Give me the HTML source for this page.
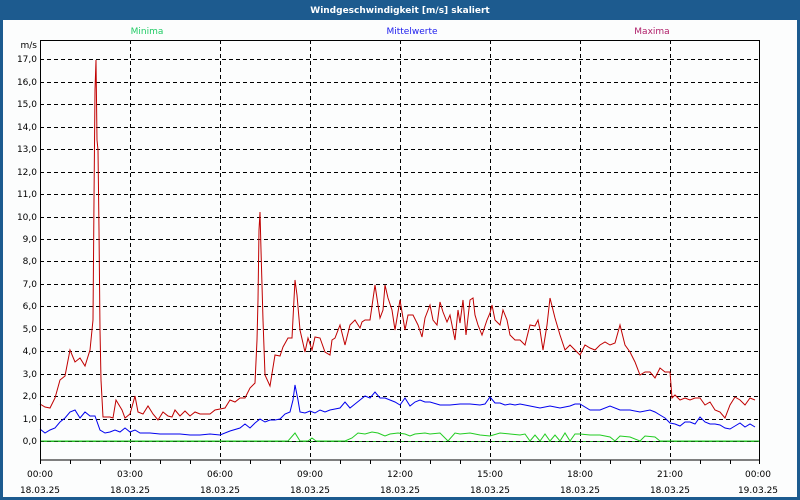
<!DOCTYPE html>
<html><head><meta charset="utf-8"><style>
html,body{margin:0;padding:0;width:800px;height:500px;overflow:hidden;background:#1d5b8f}
svg{display:block}
text{font-family:"DejaVu Sans","Liberation Sans",sans-serif;font-size:9px}
</style></head><body>
<svg width="800" height="500" xmlns="http://www.w3.org/2000/svg">
<rect x="0" y="0" width="800" height="500" fill="#1d5b8f"/>
<rect x="3" y="20" width="794" height="477" fill="#fcfdfd"/>
<text x="400" y="13" fill="#fff" font-weight="bold" font-size="10" text-anchor="middle">Windgeschwindigkeit [m/s] skaliert</text>
<text x="147" y="34" fill="#22cc66" text-anchor="middle">Minima</text>
<text x="412" y="34" fill="#2020ee" text-anchor="middle">Mittelwerte</text>
<text x="652" y="34" fill="#b0206a" text-anchor="middle">Maxima</text>
<text x="37" y="48" fill="#000" text-anchor="end">m/s</text>
<g stroke="#000" stroke-dasharray="4,3" stroke-width="1">
<path d="M40 59.5H760M40 82.5H760M40 104.5H760M40 127.5H760M40 149.5H760M40 172.5H760M40 194.5H760M40 217.5H760M40 239.5H760M40 261.5H760M40 284.5H760M40 306.5H760M40 329.5H760M40 351.5H760M40 374.5H760M40 396.5H760M40 419.5H760"/>
<path d="M130.5 40V460M220.5 40V460M310.5 40V460M400.5 40V460M490.5 40V460M580.5 40V460M670.5 40V460"/>
</g>
<path d="M40 441.5H760" stroke="#22aa22" stroke-width="1"/>
<path d="M40 441.5H760" stroke="#000" stroke-dasharray="4,3" stroke-width="1"/>
<g font-size="9" fill="#000" text-anchor="end">
<text x="37" y="62">17,0</text><text x="37" y="85">16,0</text><text x="37" y="107">15,0</text><text x="37" y="130">14,0</text><text x="37" y="152">13,0</text><text x="37" y="175">12,0</text><text x="37" y="197">11,0</text><text x="37" y="220">10,0</text><text x="37" y="242">9,0</text><text x="37" y="264">8,0</text><text x="37" y="287">7,0</text><text x="37" y="309">6,0</text><text x="37" y="332">5,0</text><text x="37" y="354">4,0</text><text x="37" y="377">3,0</text><text x="37" y="399">2,0</text><text x="37" y="422">1,0</text><text x="37" y="444">0,0</text>
</g>
<polyline fill="none" stroke="#22cc22" stroke-width="1" points="40,441 288,441 295,433 300,441 308,441 312,438 316,441 345,441 352,438 358,433 365,434 372,432 378,433 385,436 390,434 398,433 405,434 410,436 415,434 425,433 430,434 440,433 448,441 455,433 460,434 470,433 480,435 490,436 500,433 510,434 520,435 525,434 530,441 535,435 540,441 545,434 550,441 555,435 560,441 565,433 570,441 575,434 580,434 590,435 600,435 610,437 615,441 620,436 630,437 640,441 645,436 655,437 660,441 760,441"/>
<polyline fill="none" stroke="#0000ee" stroke-width="1" points="40,429 45,433 50,430 55,428 60,422 65,418 70,412 75,410 80,418 85,412 90,416 95,416 100,430 105,433 110,432 115,430 120,432 125,428 130,432 135,430 140,433 150,433 160,434 170,434 180,434 190,435 200,435 210,434 220,435 230,431 240,428 245,424 250,428 255,423 260,419 265,422 270,420 275,420 280,419 285,414 290,412 293,400 295,385 298,400 300,412 305,413 310,411 315,413 320,410 325,412 330,410 335,409 340,408 345,402 350,408 355,404 360,400 365,396 370,398 375,392 380,398 385,398 390,400 395,402 400,405 405,398 410,406 415,402 420,400 425,402 430,402 440,405 450,405 460,404 470,404 480,405 485,404 490,397 495,403 500,403 505,405 510,404 515,405 520,404 530,406 540,408 550,406 560,408 570,406 575,404 580,404 590,410 600,410 610,406 620,410 630,410 640,412 650,410 655,412 660,415 665,418 670,423 675,424 680,426 685,422 690,422 695,424 700,417 705,422 710,424 715,424 720,425 725,428 730,429 735,426 740,423 745,427 750,424 755,427"/>
<polyline fill="none" stroke="#c00000" stroke-width="1" points="40,404 45,407 50,408 55,398 60,380 65,376 70,350 75,362 80,358 85,366 90,350 93,320 94,200 95,90 96,60 97,140 98,150 99,230 100,330 101,380 103,417 110,417 113,418 116,400 122,410 125,418 130,414 135,396 138,412 143,414 148,406 153,414 158,420 163,412 168,416 172,417 175,410 180,416 185,411 190,416 195,412 200,414 205,414 210,414 215,410 220,409 225,408 230,400 235,402 240,398 245,398 250,388 255,383 257,340 258,300 259,230 260,212 261,250 263,320 265,375 270,386 275,355 280,356 283,347 288,338 292,338 295,280 297,295 300,330 305,352 308,338 312,350 315,337 320,338 325,352 330,355 332,340 335,338 340,325 345,345 350,325 355,320 360,328 362,322 365,320 370,320 375,285 378,305 380,318 383,310 385,285 388,298 392,310 395,330 400,300 405,330 408,315 413,315 418,325 422,337 425,318 430,305 433,320 437,325 440,302 443,312 447,322 450,315 455,340 458,310 460,323 463,300 466,335 470,300 473,298 475,315 478,325 482,335 487,320 490,313 492,305 495,320 500,325 503,310 507,320 510,335 515,340 520,340 525,345 530,325 535,326 538,320 540,330 543,350 547,325 550,298 555,318 560,335 565,350 570,345 575,350 580,355 585,345 590,348 595,350 600,345 605,342 610,345 615,343 620,325 625,345 630,352 635,362 640,375 645,372 650,372 655,378 660,368 665,372 670,372 672,398 675,395 680,400 685,398 690,400 695,398 700,398 705,405 710,402 715,410 720,412 725,418 730,405 735,397 740,400 745,405 750,398 755,400"/>
<rect x="40.5" y="40.5" width="719" height="419.5" fill="none" stroke="#000" stroke-width="1"/>
<path d="M70.5 460v4M100.5 460v4M130.5 460v4M160.5 460v4M190.5 460v4M220.5 460v4M250.5 460v4M280.5 460v4M310.5 460v4M340.5 460v4M370.5 460v4M400.5 460v4M430.5 460v4M460.5 460v4M490.5 460v4M520.5 460v4M550.5 460v4M580.5 460v4M610.5 460v4M640.5 460v4M670.5 460v4M700.5 460v4M730.5 460v4M40.5 460v4M759.5 460v4" stroke="#000"/>
<g fill="#000" text-anchor="middle" font-size="9">
<text x="40" y="477">00:00</text><text x="40" y="493">18.03.25</text>
<text x="130" y="477">03:00</text><text x="130" y="493">18.03.25</text>
<text x="220" y="477">06:00</text><text x="220" y="493">18.03.25</text>
<text x="310" y="477">09:00</text><text x="310" y="493">18.03.25</text>
<text x="400" y="477">12:00</text><text x="400" y="493">18.03.25</text>
<text x="490" y="477">15:00</text><text x="490" y="493">18.03.25</text>
<text x="580" y="477">18:00</text><text x="580" y="493">18.03.25</text>
<text x="670" y="477">21:00</text><text x="670" y="493">18.03.25</text>
<text x="758" y="477">00:00</text><text x="758" y="493">19.03.25</text>
</g>
</svg>
</body></html>
